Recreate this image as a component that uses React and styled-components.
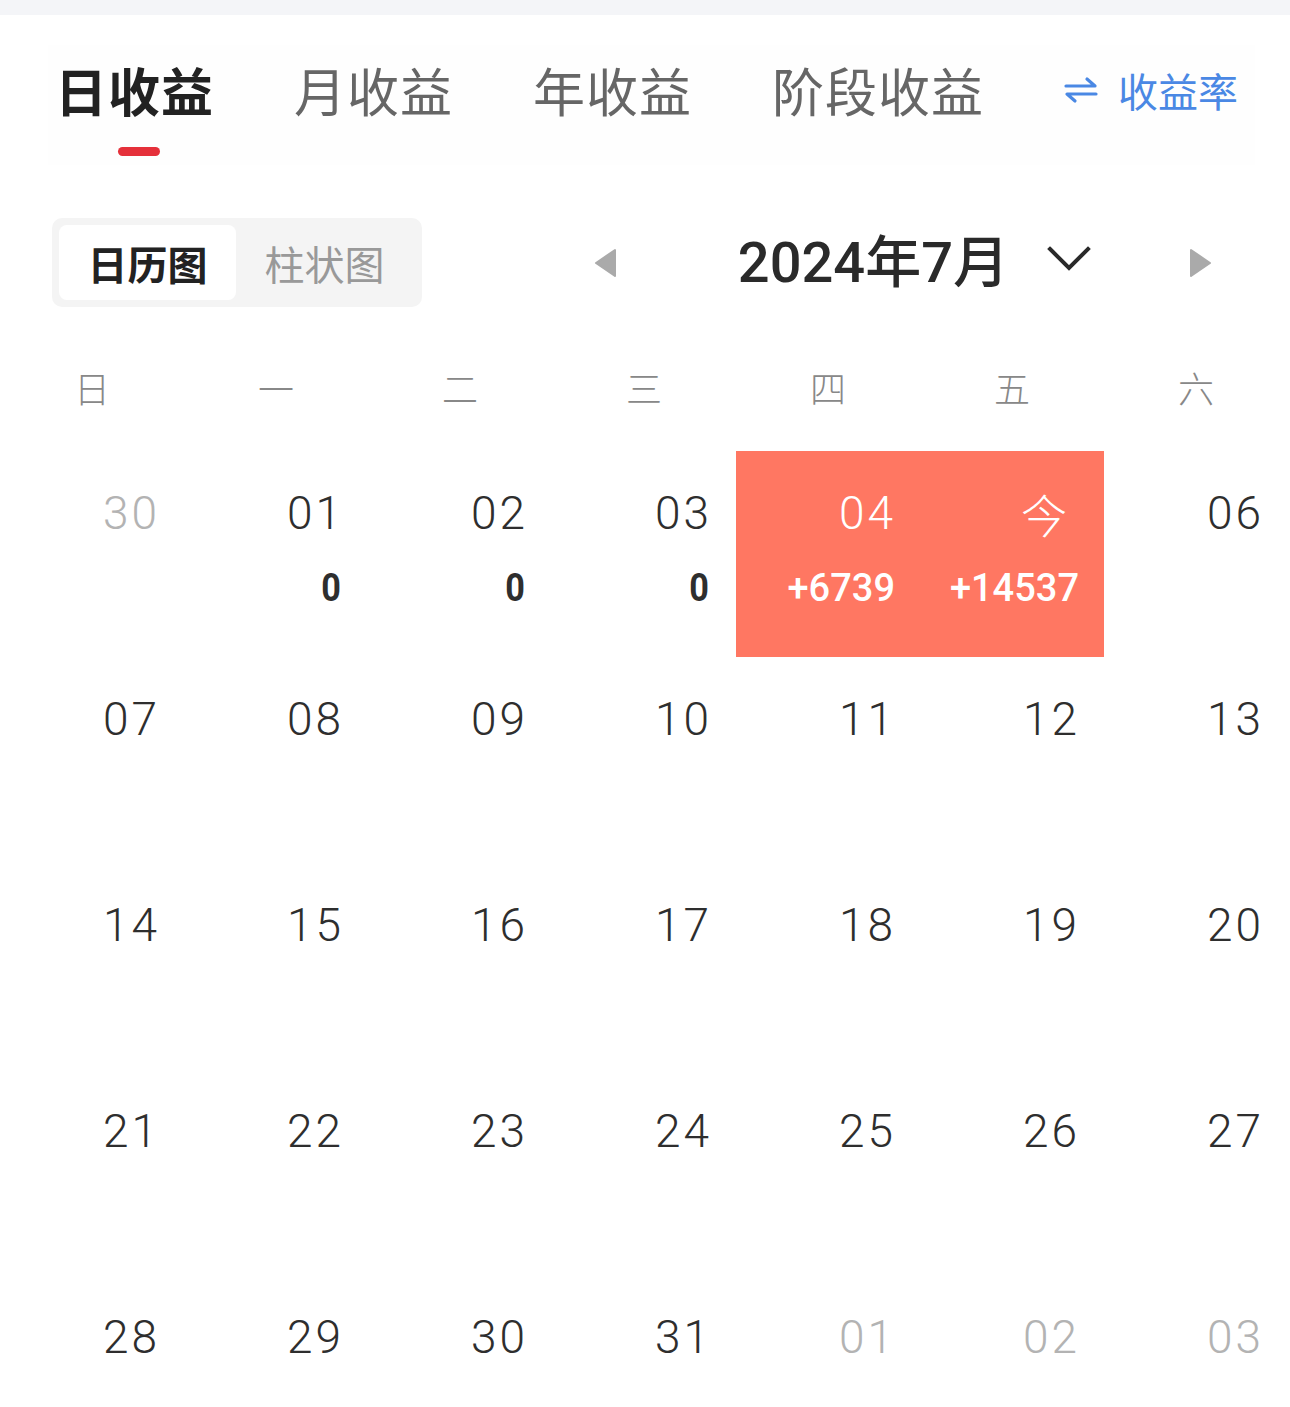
import styled, { createGlobalStyle } from 'styled-components';

const GlobalStyle = createGlobalStyle`
    html, body {
        margin: 0;
        padding: 0;
        background: #ffffff;
    }
    body {
        font-family: 'Noto Sans CJK SC', 'Noto Sans', sans-serif;
        color: #222;
    }
`;

const tabs = ['日收益', '月收益', '年收益', '阶段收益'];
const weekdays = ['日', '一', '二', '三', '四', '五', '六'];

// muted: day outside current month, hot: highlighted cells
const days = [
    { d: '30', muted: true },
    { d: '01', sub: '0' },
    { d: '02', sub: '0' },
    { d: '03', sub: '0' },
    { d: '04', sub: '+6739', hot: true },
    { d: '今', sub: '+14537', hot: true, today: true },
    { d: '06' },
    ...['07', '08', '09', '10', '11', '12', '13'].map((d) => ({ d })),
    ...['14', '15', '16', '17', '18', '19', '20'].map((d) => ({ d })),
    ...['21', '22', '23', '24', '25', '26', '27'].map((d) => ({ d })),
    ...['28', '29', '30', '31'].map((d) => ({ d })),
    { d: '01', muted: true },
    { d: '02', muted: true },
    { d: '03', muted: true },
];

const SwapIcon = () => (
    <svg width='34' height='28' viewBox='0 0 34 28' fill='none' stroke='#4a88e4' strokeWidth='3.2' strokeLinecap='round' strokeLinejoin='round'>
        <path d='M2 10 H31 L23 3' />
        <path d='M32 18 H3 L11 25' />
    </svg>
);

const Triangle = ({ dir }) => (
    <svg width='24' height='30' viewBox='0 0 24 30'>
        {dir === 'left' ? (
            <path d='M22 2 L22 28 L3 15 Z' fill='#aaaaaa' stroke='#aaaaaa' strokeWidth='2' strokeLinejoin='round' />
        ) : (
            <path d='M2 2 L2 28 L21 15 Z' fill='#aaaaaa' stroke='#aaaaaa' strokeWidth='2' strokeLinejoin='round' />
        )}
    </svg>
);

const Chevron = () => (
    <svg width='44' height='26' viewBox='0 0 44 26' fill='none' stroke='#2a2a2a' strokeWidth='4' strokeLinecap='square'>
        <path d='M3 3 L22 22 L41 3' />
    </svg>
);

const App = () => {
    return (
        <S.Page>
            <GlobalStyle />
            <S.TopStrip />
            <S.TabBar>
                {tabs.map((t, i) => (
                    <S.Tab key={t} $active={i === 0}>
                        <span>{t}</span>
                        <S.Indicator $show={i === 0} />
                    </S.Tab>
                ))}
                <S.RateLink>
                    <SwapIcon />
                    <span>收益率</span>
                </S.RateLink>
            </S.TabBar>

            <S.Toolbar>
                <S.Segmented>
                    <S.Segment $active>日历图</S.Segment>
                    <S.Segment>柱状图</S.Segment>
                </S.Segmented>
                <S.MonthNav>
                    <Triangle dir='left' />
                    <S.MonthTitle>2024年7月</S.MonthTitle>
                    <S.ChevronWrap>
                        <Chevron />
                    </S.ChevronWrap>
                    <S.NextWrap>
                        <Triangle dir='right' />
                    </S.NextWrap>
                </S.MonthNav>
            </S.Toolbar>

            <S.WeekRow>
                {weekdays.map((w) => (
                    <S.WeekDay key={w}>{w}</S.WeekDay>
                ))}
            </S.WeekRow>

            <S.Grid>
                {days.map((day, i) => (
                    <S.Cell key={i} $hot={day.hot}>
                        <S.DayNum $muted={day.muted} $hot={day.hot} $today={day.today}>
                            {day.d}
                        </S.DayNum>
                        {day.sub && <S.Profit $hot={day.hot}>{day.sub}</S.Profit>}
                    </S.Cell>
                ))}
            </S.Grid>
        </S.Page>
    );
};

export default App;

const S = {};
S.Page = styled.div`
    width: 1290px;
    height: 1407px;
    overflow: hidden;
    background: #fff;
`;

S.TopStrip = styled.div`
    height: 15px;
    background: #f4f5f8;
`;

S.TabBar = styled.div`
    display: flex;
    align-items: flex-start;
    gap: 80px;
    margin: 30px 35px 0 48px;
    padding: 14px 18px 9px 7px;
    background: #fefefe;
`;

S.Tab = styled.div`
    flex-shrink: 0;
    display: flex;
    flex-direction: column;
    align-items: center;
    gap: 26px;

    & > span {
        white-space: nowrap;
        font-size: 52px;
        line-height: 62px;
        font-weight: ${({ $active }) => ($active ? 700 : 400)};
        color: ${({ $active }) => ($active ? '#222' : '#666')};
        letter-spacing: 1px;
    }
`;

S.Indicator = styled.div`
    width: 42px;
    height: 9px;
    border-radius: 5px;
    background: ${({ $show }) => ($show ? '#e5303a' : 'transparent')};
    transform: translateX(4px);
`;

S.RateLink = styled.div`
    flex-shrink: 0;
    white-space: nowrap;
    margin-left: auto;
    display: flex;
    align-items: center;
    gap: 20px;
    height: 62px;
    color: #4a88e4;
    font-size: 40px;
`;

S.Toolbar = styled.div`
    display: flex;
    align-items: center;
    justify-content: space-between;
    margin-top: 53px;
    padding: 0 77px 0 52px;
`;

S.Segmented = styled.div`
    display: flex;
    width: 370px;
    height: 89px;
    box-sizing: border-box;
    padding: 7px;
    background: #f4f4f4;
    border-radius: 10px;
`;

S.Segment = styled.div`
    display: flex;
    align-items: center;
    justify-content: center;
    width: 177px;
    border-radius: 8px;
    font-size: 40px;
    font-weight: ${({ $active }) => ($active ? 700 : 400)};
    color: ${({ $active }) => ($active ? '#222' : '#999')};
    background: ${({ $active }) => ($active ? '#fff' : 'transparent')};
`;

S.MonthNav = styled.div`
    display: flex;
    align-items: center;
    & > svg {
        display: block;
    }
`;

S.MonthTitle = styled.div`
    margin-left: 121px;
    font-family: 'Roboto', 'Noto Sans CJK SC', sans-serif;
    font-size: 56px;
    font-weight: 500;
    color: #2a2a2a;
    line-height: 1;
    white-space: nowrap;
`;

S.ChevronWrap = styled.div`
    margin-left: 38px;
    display: flex;
    transform: translateY(-4px);
`;

S.NextWrap = styled.div`
    margin-left: 98px;
    display: flex;
`;

S.WeekRow = styled.div`
    display: grid;
    grid-template-columns: repeat(7, 184px);
    height: 60px;
    margin-top: 50px;
    margin-bottom: 34px;
    align-items: center;
`;

S.WeekDay = styled.div`
    text-align: center;
    font-size: 36px;
    font-weight: 300;
    color: #888;
    line-height: 60px;
`;

S.Grid = styled.div`
    display: grid;
    grid-template-columns: repeat(7, 184px);
    grid-auto-rows: 206px;
`;

S.Cell = styled.div`
    display: flex;
    flex-direction: column;
    align-items: flex-end;
    padding: 35px 26px 0 0;
    background: ${({ $hot }) => ($hot ? '#ff7762' : 'transparent')};
`;

S.DayNum = styled.div`
    font-family: ${({ $today }) => ($today ? "'Noto Sans CJK SC', sans-serif" : "'Roboto', 'Liberation Sans', sans-serif")};
    font-size: 46px;
    font-weight: 300;
    line-height: 55px;
    letter-spacing: ${({ $today }) => ($today ? '0' : '3px')};
    margin-right: ${({ $today }) => ($today ? '11px' : '-2px')};
    color: ${({ $hot, $muted }) => ($hot ? '#fff' : $muted ? '#b3b3b3' : '#2e2e2e')};
`;

S.Profit = styled.div`
    margin-top: 24px;
    font-family: 'Roboto', sans-serif;
    font-size: 38px;
    font-weight: ${({ $hot }) => ($hot ? 500 : 700)};
    line-height: 46px;
    color: ${({ $hot }) => ($hot ? '#fff' : '#2e2e2e')};
    margin-right: ${({ $hot }) => ($hot ? '-1px' : '1px')};
    transform-origin: right center;
    transform: ${({ $hot }) => ($hot ? 'none' : 'scaleX(0.9)')};
`;
